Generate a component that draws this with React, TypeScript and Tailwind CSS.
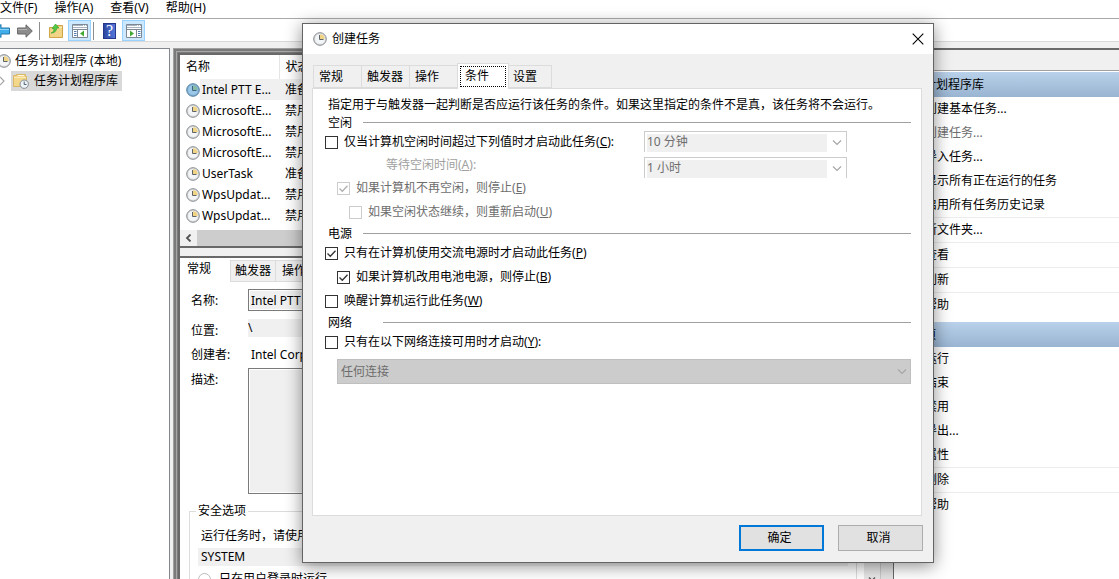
import { useState, type ReactNode } from 'react';
import { clsx } from 'clsx';

const menus = ['文件(F)', '操作(A)', '查看(V)', '帮助(H)'];

const tasks = [
  { name: 'Intel PTT E...', status: '准备', active: true },
  { name: 'MicrosoftE...', status: '禁用' },
  { name: 'MicrosoftE...', status: '禁用' },
  { name: 'MicrosoftE...', status: '禁用' },
  { name: 'UserTask', status: '准备' },
  { name: 'WpsUpdat...', status: '禁用' },
  { name: 'WpsUpdat...', status: '禁用' },
];

const libraryActions = [
  { name: '创建基本任务...' },
  { name: '创建任务...', disabled: true },
  { name: '导入任务...' },
  { name: '显示所有正在运行的任务' },
  { name: '启用所有任务历史记录' },
  { name: '新文件夹...', line: true },
  { name: '查看', line: true },
  { name: '刷新', line: true },
  { name: '帮助', line: true },
];

const itemActions = [
  { name: '运行' },
  { name: '结束' },
  { name: '禁用' },
  { name: '导出...' },
  { name: '属性' },
  { name: '删除', line: true },
  { name: '帮助', line: true },
];

const dialogTabs = ['常规', '触发器', '操作', '条件', '设置'];

function ClockIcon({ blue = false }: { blue?: boolean }) {
  return (
    <svg width="14" height="14" viewBox="0 0 14 14" className="shrink-0" aria-hidden="true">
      <circle cx="7" cy="7" r="6.3" fill={blue ? '#7fb0d6' : '#dfe1e3'} stroke={blue ? '#57809f' : '#85898d'} />
      <circle cx="7" cy="7" r="4.8" fill={blue ? '#9cc8e8' : '#f4f5f6'} />
      <path d="M7 7V2.2A4.8 4.8 0 0 1 11.8 7z" fill={blue ? '#86b9a8' : '#f0d486'} />
      <path d="M6.500 3v4.500h4" fill="none" stroke={blue ? '#3f6482' : '#5f6468'} />
    </svg>
  );
}

function FolderClockIcon() {
  return (
    <svg width="16" height="16" viewBox="0 0 16 16" className="shrink-0" aria-hidden="true">
      <path d="M.5 2.500h3v-1h9v2h1v10H.5z" fill="#f3d78b" stroke="#d9b767" />
      <path d="M5 2.500h6" stroke="#fff8e0" />
      <path d="M1 4.500h12" stroke="#fbeab8" />
      <circle cx="11.2" cy="11.2" r="4.2" fill="#eef3f7" stroke="#7f8b95" />
      <path d="M11.2 8.500v3h2.300" fill="none" stroke="#50606d" />
    </svg>
  );
}

function PaneIcon({ flip = false }: { flip?: boolean }) {
  return (
    <svg width="16" height="14" viewBox="0 0 16 14" aria-hidden="true">
      <path d="M.5.5h15v13H.5z" fill="#fff" stroke="#7d8894" />
      <path d="M1 1.500h14M1 3.500h14" stroke="#a9b4c0" />
      <path d="M11 1.500h1M13 1.500h1" stroke="#fff" />
      <path d="M1 5.500h14" stroke="#7d8894" />
      {flip ? (
        <>
          <path d="M10.500 6v8" stroke="#7d8894" />
          <path d="M12 7.500h2.500M12 9.500h2.500M12 11.500h2.500" stroke="#4e7db8" />
          <path d="M4 6.500v6L8 9.500z" fill="#41a832" />
        </>
      ) : (
        <>
          <path d="M5.500 6v8" stroke="#7d8894" />
          <path d="M2 7.500h2.500M2 9.500h2.500M2 11.500h2.500" stroke="#4e7db8" />
          <path d="M12 6.500v6L8 9.500z" fill="#41a832" />
        </>
      )}
    </svg>
  );
}

function Chevron() {
  return (
    <svg width="10" height="6" viewBox="0 0 10 6" className="pointer-events-none absolute right-1 bottom-[9px]" aria-hidden="true">
      <path d="M1 .5l4 4 4-4" fill="none" stroke="#a6a6a6" strokeWidth="1.2" />
    </svg>
  );
}

function Toolbar() {
  return (
    <div className="flex h-[23px] items-center border-b border-[#d9d9d9] bg-white pt-px">
      <button aria-label="后退" className="w-[10px] overflow-hidden">
        <svg width="10" height="14" viewBox="0 0 10 14">
          <path d="M-6 7l7-6.500v3.500h8.500v6H1v3.500z" fill="#41adea" stroke="#2479ad" />
          <path d="M0 5.500h9" stroke="#8bd3f7" />
        </svg>
      </button>
      <button aria-label="前进" className="ml-[7px]">
        <svg width="16" height="14" viewBox="0 0 16 14">
          <path d="M15.300 7L9 .8V4H.6v6H9v3.200z" fill="#8c8c8c" stroke="#666" />
          <path d="M1 5.500h9" stroke="#b5b5b5" />
        </svg>
      </button>
      <span className="ml-[6px] h-[18px] w-px bg-[#8d8d8d]" />
      <button aria-label="上移" className="ml-[9px]">
        <svg width="15" height="15" viewBox="0 0 15 15">
          <path d="M.5 4.500h6l1-2h6v12H.5z" fill="#f2d486" stroke="#cfa548" />
          <path d="M7 4.500h6" stroke="#fbe9b5" />
          <path d="M2 10c2-.5 3-2 3-4.500H3L6.500 1 10 5H7.800C7.500 8 5.500 10.300 2 10z" fill="#54c948" stroke="#2f9b2b" strokeWidth=".6" />
        </svg>
      </button>
      <button aria-label="显示/隐藏控制台树" className="ml-1 flex h-[21px] w-[23px] items-center justify-center border border-[#99d1ff] bg-[#cce8ff]">
        <PaneIcon />
      </button>
      <span className="ml-[2px] h-[18px] w-px bg-[#8d8d8d]" />
      <button aria-label="帮助" className="ml-[9px] flex h-4 w-[13px] items-center justify-center border border-[#24378d] bg-linear-to-r from-[#2c479f] to-[#5578dc] font-['Liberation_Serif',serif] text-base leading-none text-white">
        ?
      </button>
      <button aria-label="显示/隐藏操作窗格" className="ml-[6px] flex h-[21px] w-[23px] items-center justify-center border border-[#99d1ff] bg-[#cce8ff]">
        <PaneIcon flip />
      </button>
    </div>
  );
}

function ConsoleTree() {
  return (
    <nav className="w-[170px] shrink-0 border-t border-r border-[#828790] bg-white pt-[2px]">
      <a href="#local" className="flex h-5 items-center gap-1">
        <span className="-ml-[3px] flex">
          <ClockIcon />
        </span>
        任务计划程序 (本地)
      </a>
      <div className="flex h-5 items-center">
        <svg width="11" height="10" viewBox="0 0 11 10" aria-hidden="true">
          <path d="M0 1l4 4-4 4" fill="none" stroke="#a6a6a6" strokeWidth="1.2" />
        </svg>
        <a href="#library" className="flex h-5 items-center gap-[5px] bg-[#d9d9d9] pr-1 pl-[2px]">
          <FolderClockIcon />
          任务计划程序库
        </a>
      </div>
    </nav>
  );
}

function TaskList() {
  return (
    <div className="border-b-2 border-[#696969] bg-white">
      <table className="w-full table-fixed border-collapse text-left">
        <thead>
          <tr className="h-6">
            <th className="w-[99px] border-r border-[#e5e5e5] pl-[6px] font-normal">名称</th>
            <th className="pl-[6px] font-normal">状态</th>
          </tr>
        </thead>
        <tbody>
          {tasks.map((task, i) => (
            <tr key={i} className="h-[21px]">
              <td className="p-0">
                <div className="flex h-[21px] items-center pl-[6px]">
                  <ClockIcon blue={task.active} />
                  <span className={clsx('flex h-[21px] flex-1 items-center pl-[2px]', task.active && 'bg-[#f0f0f0]')}>{task.name}</span>
                </div>
              </td>
              <td className={clsx('p-0 pl-[6px]', task.active && 'bg-[#f0f0f0]')}>{task.status}</td>
            </tr>
          ))}
        </tbody>
      </table>
      <div className="mt-1 flex h-4 bg-[#f0f0f0]">
        <button aria-label="向左滚动" className="flex w-[17px] items-center justify-center">
          <svg width="7" height="8" viewBox="0 0 7 8">
            <path d="M5.500.5L2 4l3.500 3.500" fill="none" stroke="#505050" strokeWidth="1.8" />
          </svg>
        </button>
        <div className="flex-1 bg-[#cdcdcd]" />
      </div>
    </div>
  );
}

function TaskDetails() {
  return (
    <div className="flex min-h-0 flex-1 overflow-hidden border-t-2 border-[#696969] bg-white">
      <div className="min-w-0 flex-1">
        <div className="flex h-6 items-end text-left">
          <button className="h-6 w-[50px] pb-[3px] pl-[7px] text-left">常规</button>
          <button className="h-[22px] border border-[#dcdcdc] bg-[#f0f0f0] px-1">触发器</button>
          <button className="h-[22px] border border-l-0 border-[#dcdcdc] bg-[#f0f0f0] px-[6px]">操作</button>
        </div>
        <div className="grid grid-cols-[57px_1fr] pt-[7px] pr-12 pl-[11px]">
          <label htmlFor="name" className="h-[30px] pt-1">名称:</label>
          <input id="name" readOnly value="Intel PTT" className="h-[22px] border border-[#7a7a7a] bg-[#f0f0f0] px-[2px] outline-1 -outline-offset-2 outline-white" />
          <span className="h-6 pt-1">位置:</span>
          <span className="h-[18px] bg-[#f0f0f0] pt-px">\</span>
          <span className="h-[25px] pt-1">创建者:</span>
          <span className="h-[25px] pt-1 pl-[3px]">Intel Corporation</span>
          <label htmlFor="desc" className="pt-1">描述:</label>
          <textarea id="desc" readOnly className="block h-[126px] resize-none border border-[#7a7a7a] bg-[#f0f0f0] outline-1 -outline-offset-2 outline-white" />
        </div>
        <fieldset className="mt-[9px] mr-[7px] ml-[9px] border border-[#dcdcdc] px-2 pb-6">
          <legend className="-ml-[2px] px-[2px]">安全选项</legend>
          <p className="mt-[9px] pl-[3px]">运行任务时，请使用下列用户帐户:</p>
          <p className="mt-1 h-[18px] bg-[#f0f0f0] pt-px pl-[3px]">SYSTEM</p>
          <label className="mt-[5px] flex items-center gap-2">
            <input type="radio" name="logon" disabled className="size-[13px] appearance-none rounded-full border border-[#bcbcbc]" />
            只在用户登录时运行
          </label>
        </fieldset>
      </div>
      <div className="flex w-4 items-end justify-center bg-[#e8e8e8]">
        <svg width="8" height="5" viewBox="0 0 8 5" aria-hidden="true">
          <path d="M1 3.500l3 3 3-3" fill="none" stroke="#606060" strokeWidth="1.5" />
        </svg>
      </div>
    </div>
  );
}

function ActionGroup({ title, items }: { title: string; items: typeof libraryActions }) {
  return (
    <section>
      <h2 className="flex h-[25px] items-center bg-linear-to-b from-[#b9d1ea] to-[#99b4d1] pl-[6px]">{title}</h2>
      <ul>
        {items.map((item) => (
          <li key={item.name} className={clsx(item.line && 'border-t border-[#ececec]')}>
            <button disabled={item.disabled} className="flex h-6 w-full items-center pl-[31px] disabled:text-[#6d6d6d]">
              {item.name}
            </button>
          </li>
        ))}
      </ul>
    </section>
  );
}

function ActionsPane() {
  return (
    <aside className="w-[225px] shrink-0 border-t-2 border-[#696969] bg-white">
      <div className="mb-px h-[21px] border-b border-[#a0a0a0] bg-[#f0f0f0]" />
      <div className="flex flex-col gap-[5px]">
        <ActionGroup title="任务计划程序库" items={libraryActions} />
        <ActionGroup title="所选项" items={itemActions} />
      </div>
    </aside>
  );
}

interface CheckProps {
  text: string;
  hotkey: string;
  tail?: string;
  checked?: boolean;
  disabled?: boolean;
  className?: string;
}

function Check({ text, hotkey, tail = '', checked, disabled, className }: CheckProps) {
  return (
    <label className={clsx('flex h-6 items-center gap-[6px]', disabled && 'text-[#6d6d6d]', className)}>
      <span className="relative flex">
        <input
          type="checkbox"
          defaultChecked={checked}
          disabled={disabled}
          className="peer size-[13px] appearance-none border border-[#333] bg-white disabled:border-[#ccc]"
        />
        <svg viewBox="0 0 13 13" className="pointer-events-none absolute inset-0 hidden size-[13px] peer-checked:block" aria-hidden="true">
          <path d="M2.500 6.500l2.800 2.800 5.200-5.500" fill="none" stroke={disabled ? '#b0b0b0' : '#333'} strokeWidth="1.3" />
        </svg>
      </span>
      <span>
        {text}(<u>{hotkey}</u>){tail}
      </span>
    </label>
  );
}

function GroupTitle({ children, wide = false }: { children: ReactNode; wide?: boolean }) {
  return (
    <div className="flex h-[17px] items-center pt-[2px] pl-[3px]">
      <h3 className={clsx('shrink-0', wide ? 'w-[55px]' : 'w-[35px]')}>{children}</h3>
      <span className="h-px flex-1 bg-[#a0a0a0]" />
    </div>
  );
}

function TimeSelect({ id, label, value }: { id: string; label?: string; value: string }) {
  return (
    <div className="relative h-[21px] w-[203px] border border-b-0 border-[#ccc] pt-[2px] pr-[19px] pl-[2px]">
      <select id={id} disabled aria-label={label} className="block h-[18px] w-full appearance-none bg-[#f0f0f0] pb-[2px] text-[#6d6d6d] opacity-100">
        <option>{value}</option>
      </select>
      <svg width="10" height="6" viewBox="0 0 10 6" className="pointer-events-none absolute right-1 bottom-[6px]" aria-hidden="true">
        <path d="M1 .5l4 4 4-4" fill="none" stroke="#a6a6a6" strokeWidth="1.2" />
      </svg>
    </div>
  );
}

function CreateTaskDialog() {
  const [tab, setTab] = useState('条件');

  return (
    <div role="dialog" aria-label="创建任务" className="absolute top-[23px] left-[302px] w-[632px] border border-[#646464] bg-[#f0f0f0] shadow-[0_3px_16px_rgba(0,0,0,0.45)]">
      <header className="flex h-[30px] items-center bg-white pr-[9px] pl-[10px]">
        <ClockIcon />
        <h1 className="ml-[5px] flex-1">创建任务</h1>
        <button aria-label="关闭">
          <svg width="12" height="12" viewBox="0 0 12 12">
            <path d="M.7.7l10.600 10.600M11.300.7L.7 11.300" stroke="#000" strokeWidth="1.1" />
          </svg>
        </button>
      </header>

      <div className="pt-[9px] pr-[11px] pb-[11px] pl-[9px]">
        <div role="tablist" className="flex h-[25px] items-end pl-px">
          {dialogTabs.map((name) => (
            <button
              key={name}
              role="tab"
              aria-selected={tab === name}
              onClick={() => setTab(name)}
              className={clsx(
                'border border-[#dcdcdc] text-left',
                tab === name
                  ? 'relative z-10 -mb-px -ml-px h-[26px] w-[52px] border-b-0 bg-white p-[2px]'
                  : 'h-[23px] w-[49px] bg-[#f0f0f0] pl-[5px] not-first:-ml-px last:w-11 last:pl-1',
              )}
            >
              {tab === name ? <span className="block h-[21px] border border-dotted border-black pt-px pl-1">{name}</span> : name}
            </button>
          ))}
        </div>

        <div className="h-[428px] border border-[#dcdcdc] bg-white pt-2 pr-[10px] pl-3">
          <p className="pl-[3px]">指定用于与触发器一起判断是否应运行该任务的条件。如果这里指定的条件不是真，该任务将不会运行。</p>
          <GroupTitle>空闲</GroupTitle>
          <div className="flex">
            <div className="w-[319px]">
              <Check text="仅当计算机空闲时间超过下列值时才启动此任务" hotkey="C" tail=":" />
              <label htmlFor="wait" className="flex h-[22px] items-center pl-[61px] text-[#a0a0a0]">
                <span>等待空闲时间(<u>A</u>):</span>
              </label>
              <Check text="如果计算机不再空闲，则停止" hotkey="E" checked disabled className="pl-3" />
              <Check text="如果空闲状态继续，则重新启动" hotkey="U" disabled className="pl-6" />
            </div>
            <div className="flex flex-col gap-[5px] pt-px">
              <TimeSelect id="idle" label="空闲时间" value="10 分钟" />
              <TimeSelect id="wait" value="1 小时" />
            </div>
          </div>

          <GroupTitle>电源</GroupTitle>
          <Check text="只有在计算机使用交流电源时才启动此任务" hotkey="P" checked />
          <Check text="如果计算机改用电池电源，则停止" hotkey="B" checked className="pl-3" />
          <Check text="唤醒计算机运行此任务" hotkey="W" />

          <GroupTitle wide>网络</GroupTitle>
          <Check text="只有在以下网络连接可用时才启动" hotkey="Y" tail=":" />
          <div className="relative mt-[5px] ml-3">
            <select disabled aria-label="网络连接" className="block h-[25px] w-full appearance-none border border-[#bfbfbf] bg-[#ccc] px-[3px] text-[#6d6d6d] opacity-100">
              <option>任何连接</option>
            </select>
            <Chevron />
          </div>
        </div>

        <div className="mt-[9px] -mr-px flex justify-end gap-[14px]">
          <button className="h-[26px] w-[85px] border-2 border-[#0078d7] bg-[#e1e1e1] pr-1">确定</button>
          <button className="h-[26px] w-[85px] border border-[#adadad] bg-[#e1e1e1] pr-1">取消</button>
        </div>
      </div>
    </div>
  );
}

export default function App() {
  return (
    <div className="relative flex h-screen flex-col overflow-hidden bg-[#f0f0f0] font-['Noto_Sans','Noto_Sans_CJK_SC',sans-serif] text-[12px] leading-4 text-black">
      <div className="flex h-[19px] items-start gap-[17px] border-b border-[#a9a9a9] bg-white">
        {menus.map((menu) => (
          <button key={menu}>{menu}</button>
        ))}
      </div>
      <Toolbar />
      <main className="flex min-h-0 flex-1 gap-[3px] pt-[6px]">
        <ConsoleTree />
        <div className="flex min-w-0 flex-1">
          <div className="flex min-w-0 flex-1 flex-col border-r border-[#696969] bg-[#e3e3e3] pt-[5px] pr-3 pl-[5px] shadow-[inset_1px_1px_#a0a0a0,inset_3px_3px_#7a7a7a,inset_4px_4px_#a8a8a8,inset_5px_5px_#7a7a7a]">
            <div className="flex min-h-0 flex-1 flex-col gap-2 border-t-2 border-r border-l-2 border-t-[#696969] border-r-[#c8c8c8] border-l-[#696969] bg-[#f0f0f0]">
              <TaskList />
              <TaskDetails />
            </div>
          </div>
          <ActionsPane />
        </div>
      </main>
      <CreateTaskDialog />
    </div>
  );
}
